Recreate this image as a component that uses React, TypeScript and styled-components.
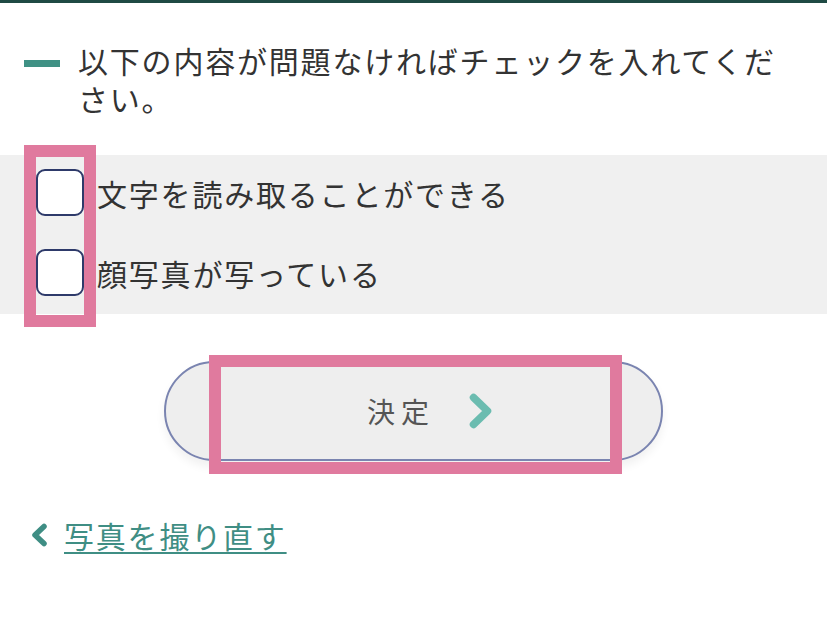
import styled, { createGlobalStyle } from 'styled-components';

const GlobalStyle = createGlobalStyle`
    html, body {
        margin: 0;
        padding: 0;
        background: #ffffff;
    }
    body {
        font-family: "Noto Sans CJK JP", "Noto Sans", sans-serif;
        color: #333333;
    }
`;

const Page = styled.div`
    width: 827px;
    min-height: 636px;
    border-top: 3px solid #1f4a44;
    box-sizing: border-box;
`;

const Heading = styled.div`
    display: flex;
    align-items: flex-start;
    column-gap: 18px;
    padding: 38px 40px 0 24px;
`;

const Dash = styled.span`
    flex: 0 0 36px;
    height: 7px;
    margin-top: 19px;
    background-color: #3f9184;
`;

const HeadingText = styled.p`
    margin: 0;
    width: 715px;
    font-size: 30px;
    line-height: 38px;
    letter-spacing: 1.8px;
    color: #333333;
`;

const CheckArea = styled.div`
    position: relative;
    margin-top: 38px;
    padding: 14px 0 18px 36px;
    background-color: #f0f0f0;
    display: flex;
    flex-direction: column;
    row-gap: 33px;
`;

const CheckRow = styled.label`
    display: flex;
    align-items: center;
    column-gap: 13px;
`;

const Box = styled.span`
    width: 48px;
    height: 47px;
    box-sizing: border-box;
    border: 2px solid #2e3a6a;
    border-radius: 9px;
    background-color: #ffffff;
`;

const CheckLabel = styled.span`
    font-size: 30px;
    letter-spacing: 1.8px;
    color: #333333;
    line-height: 40px;
`;

const Highlight = styled.div<{ $top: number; $left: number; $width: number; $height: number }>`
    position: absolute;
    top: ${(p) => p.$top}px;
    left: ${(p) => p.$left}px;
    width: ${(p) => p.$width}px;
    height: ${(p) => p.$height}px;
    box-sizing: border-box;
    border: 12px solid #e07a9e;
    pointer-events: none;
`;

const ButtonRow = styled.div`
    display: flex;
    justify-content: center;
    padding-top: 47px;
`;

const SubmitButton = styled.button`
    position: relative;
    width: 499px;
    height: 100px;
    box-sizing: border-box;
    border: 2px solid #7a84b0;
    border-radius: 50px;
    background-color: #eeeeee;
    box-shadow: 0 6px 10px rgba(0, 0, 0, 0.06);
    display: flex;
    align-items: center;
    justify-content: center;
    column-gap: 34px;
    padding: 0 0 0 32px;
    font-family: "Noto Sans CJK JP", "Noto Sans", sans-serif;
    cursor: pointer;
`;

const ButtonText = styled.span`
    font-size: 28px;
    letter-spacing: 6px;
    color: #555555;
`;

const BackLink = styled.a`
    display: flex;
    align-items: center;
    column-gap: 16px;
    margin: 54px 0 0 31px;
    width: fit-content;
    text-decoration: none;
    cursor: pointer;
`;

const LinkText = styled.span`
    font-size: 30px;
    letter-spacing: 1.8px;
    line-height: 40px;
    color: #3f8e84;
    text-decoration: underline;
    text-decoration-thickness: 2px;
    text-underline-offset: 4px;
`;

const NextIcon = () => (
    <svg width="23" height="36" viewBox="0 0 23 36">
        <path d="M4.5 4.5 L18.5 18 L4.5 31.5" fill="none" stroke="#6bbcb0" strokeWidth="7.5" strokeLinecap="round" strokeLinejoin="round" />
    </svg>
);

const BackIcon = () => (
    <svg width="17" height="24" viewBox="0 0 17 24">
        <path d="M13 3.5 L4 12 L13 20.5" fill="none" stroke="#3f8e84" strokeWidth="5.5" strokeLinecap="round" strokeLinejoin="round" />
    </svg>
);

const checks = ['文字を読み取ることができる', '顔写真が写っている'];

const App = () => {
    return (
        <>
            <GlobalStyle />
            <Page>
                <Heading>
                    <Dash />
                    <HeadingText>以下の内容が問題なければチェックを入れてください。</HeadingText>
                </Heading>
                <CheckArea>
                    {checks.map((text) => (
                        <CheckRow key={text}>
                            <Box />
                            <CheckLabel>{text}</CheckLabel>
                        </CheckRow>
                    ))}
                    <Highlight $top={-10} $left={24} $width={72} $height={182} />
                </CheckArea>
                <ButtonRow>
                    <SubmitButton type="button">
                        <ButtonText>決定</ButtonText>
                        <NextIcon />
                        <Highlight $top={-8} $left={43} $width={413} $height={119} />
                    </SubmitButton>
                </ButtonRow>
                <BackLink>
                    <BackIcon />
                    <LinkText>写真を撮り直す</LinkText>
                </BackLink>
            </Page>
        </>
    );
};

export default App;
